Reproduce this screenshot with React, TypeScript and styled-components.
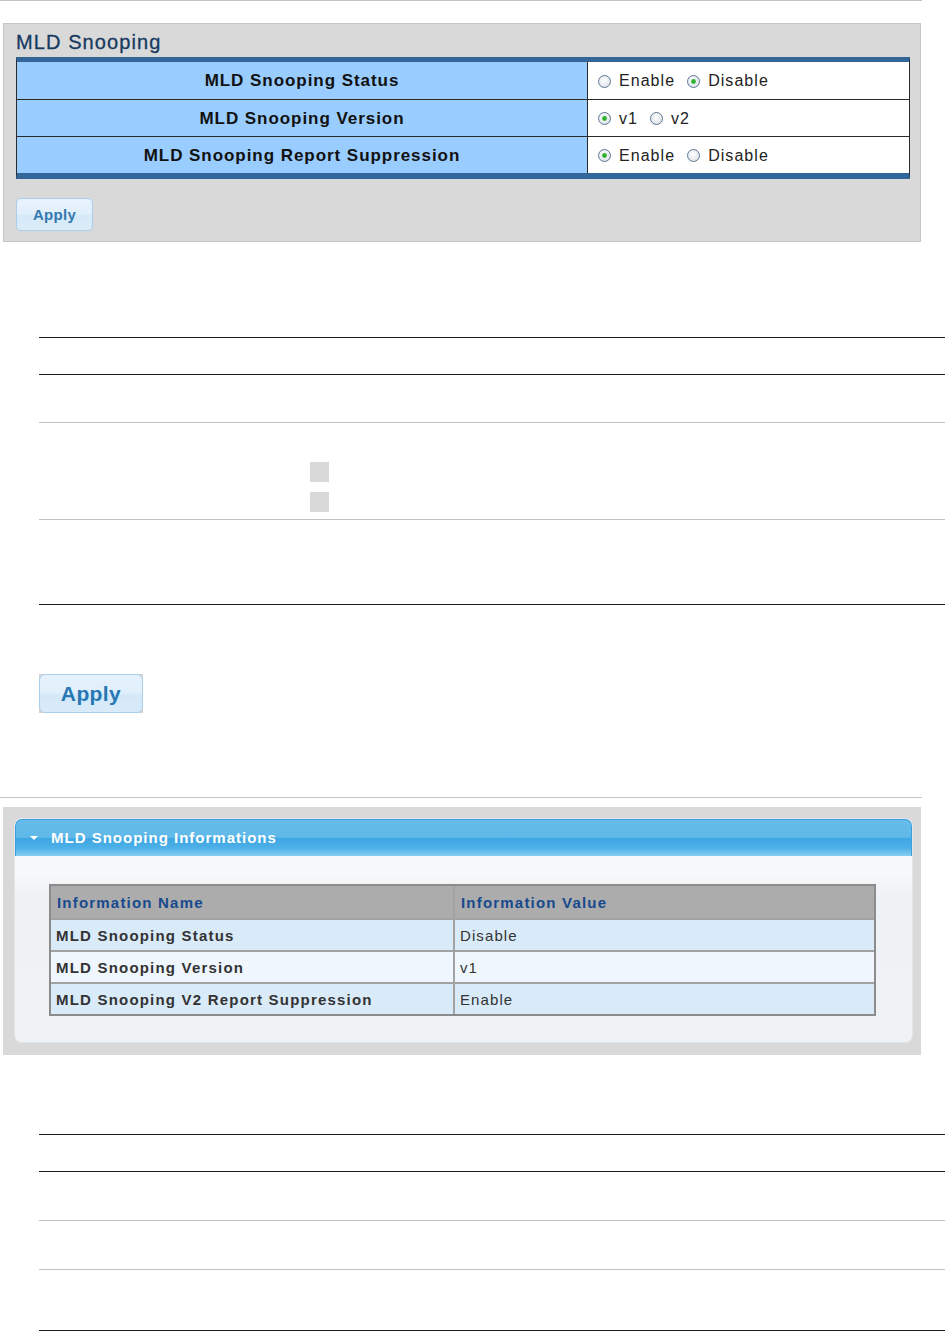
import { Fragment } from "react";
import styled, { createGlobalStyle } from "styled-components";

const GlobalStyle = createGlobalStyle`
  html, body {
    margin: 0;
    padding: 0;
    background: #fff;
  }
  body {
    font-family: "Liberation Sans", Arial, sans-serif;
  }
`;

const Page = styled.div`
  width: 945px;
  display: flex;
  flex-direction: column;
`;

const Rule = styled.div<{ $gap: number }>`
  width: 922px;
  height: 1px;
  margin-top: ${(p) => p.$gap}px;
  background: #c4c4c4;
  flex-shrink: 0;
`;

/* ---------- settings panel ---------- */

const Panel = styled.section`
  margin: 22px 0 0 3px;
  width: 918px;
  box-sizing: border-box;
  border: 1px solid #c6c6c6;
  background: #d9d9d9;
  padding: 6px 10px 10px 12px;
`;

const PanelTitle = styled.h2`
  margin: 0 0 3px;
  font-family: "Liberation Sans", Arial, sans-serif;
  font-size: 20px;
  line-height: 24px;
  font-weight: normal;
  letter-spacing: 1.1px;
  color: #163a60;
  -webkit-text-stroke: 0.3px #163a60;
`;

const SettingsGrid = styled.div`
  display: grid;
  grid-template-columns: 570px 1fr;
  grid-template-rows: 37px 36px 36px;
  gap: 1px;
  background: #2a2a2a;
  border-left: 1px solid #2a2a2a;
  border-right: 1px solid #2a2a2a;
  border-top: 5px solid #336699;
  border-bottom: 6px solid #336699;
`;

const LabelCell = styled.div`
  background: #99ccff;
  display: flex;
  align-items: center;
  justify-content: center;
  padding-top: 1px;
  font-size: 17px;
  font-weight: bold;
  letter-spacing: 0.95px;
  color: #111;
`;

const ValueCell = styled.div`
  background: #fff;
  display: flex;
  align-items: center;
  padding: 1px 0 0 10px;
`;

const Option = styled.label`
  display: flex;
  align-items: center;
  margin-right: 12px;
  font-size: 16px;
  letter-spacing: 1.05px;
  color: #222;
`;

const OptionText = styled.span`
  margin-left: 8px;
`;

const SmallApply = styled.button`
  margin-top: 19px;
  width: 77px;
  height: 33px;
  border: 1px solid #a9cdea;
  border-radius: 5px;
  background: linear-gradient(#e8f3fc 0%, #e1effb 48%, #d5e9f8 52%, #dcedf9 100%);
  font-family: "Liberation Sans", Arial, sans-serif;
  font-size: 15px;
  font-weight: bold;
  letter-spacing: 0.3px;
  color: #3478b0;
  padding: 0;
  display: block;
`;

function Radio({ checked }: { checked?: boolean }) {
  return (
    <svg width="13" height="13" viewBox="0 0 13 13">
      <defs>
        <radialGradient id="rg" cx="45%" cy="40%" r="60%">
          <stop offset="0%" stopColor="#ffffff" />
          <stop offset="100%" stopColor="#dde2e8" />
        </radialGradient>
      </defs>
      <circle cx="6.5" cy="6.5" r="6" fill="url(#rg)" stroke="#5f7893" strokeWidth="1" />
      {checked && <circle cx="6.5" cy="6.5" r="2.4" fill="#2fb12f" />}
    </svg>
  );
}

const settings = [
  { label: "MLD Snooping Status", options: ["Enable", "Disable"], selected: 1 },
  { label: "MLD Snooping Version", options: ["v1", "v2"], selected: 0 },
  { label: "MLD Snooping Report Suppression", options: ["Enable", "Disable"], selected: 0 },
];

/* ---------- empty document tables ---------- */

const DocTable = styled.div<{ $gap: number }>`
  margin: ${(p) => p.$gap}px 0 0 39px;
  width: 906px;
  border-top: 1px solid #1c1c1c;
  display: flex;
  flex-direction: column;
`;

const PlainRow = styled.div<{ $h: number; $dark?: boolean }>`
  height: ${(p) => p.$h}px;
  border-bottom: 1px solid ${(p) => (p.$dark ? "#1c1c1c" : "#c0c0c0")};
`;

const SquareRow = styled.div`
  height: 57px;
  border-bottom: 1px solid #c0c0c0;
  display: flex;
  flex-direction: column;
  gap: 10px;
  padding: 39px 0 0 271px;
`;

const Square = styled.div`
  width: 19px;
  height: 20px;
  background: #d9d9d9;
`;

const BigApplyFrame = styled.div`
  margin: 69px 0 0 39px;
  width: 104px;
  height: 39px;
  background: #d4d4d4;
`;

const BigApply = styled.button`
  width: 104px;
  height: 39px;
  border: 1px solid #a9cfec;
  border-radius: 6px;
  background: linear-gradient(#e6f2fc 0%, #e0effb 48%, #d3e8f8 54%, #d9ebf9 100%);
  font-family: "Liberation Sans", Arial, sans-serif;
  font-size: 21px;
  font-weight: bold;
  letter-spacing: 0.4px;
  color: #2677b3;
  padding: 0;
  display: block;
`;

/* ---------- information panel ---------- */

const InfoOuter = styled.section`
  margin: 9px 0 0 3px;
  width: 918px;
  height: 248px;
  box-sizing: border-box;
  background: #d9d9d9;
  padding: 12px 9px 13px 12px;
  display: flex;
`;

const InfoCard = styled.div`
  flex: 1;
  border-radius: 7px;
  background: linear-gradient(#f8f9fb 0px, #f7f8fa 55px, #eff2f5 75px, #f0f3f6 100%);
  box-shadow: 0 0 0 1px #e2e6ea;
  display: flex;
  flex-direction: column;
`;

const InfoHeader = styled.div`
  height: 37px;
  box-sizing: border-box;
  border: 1px solid #3b9fdc;
  border-bottom: none;
  border-radius: 7px 7px 0 0;
  background: linear-gradient(
    #66bcea 0%,
    #60b9e9 48%,
    #3da6e3 52%,
    #4eb1e8 78%,
    #86cdf0 100%
  );
  display: flex;
  align-items: center;
  padding: 0 0 1px 14px;
  color: #fff;
  font-size: 15px;
  font-weight: bold;
  letter-spacing: 1px;
`;

const Caret = styled.span`
  width: 0;
  height: 0;
  border-left: 4px solid transparent;
  border-right: 4px solid transparent;
  border-top: 4px solid #fff;
  margin-right: 13px;
`;

const InfoGrid = styled.div`
  margin: 28px 0 0 34px;
  width: 827px;
  box-sizing: border-box;
  display: grid;
  grid-template-columns: 402px 1fr;
  grid-template-rows: 32px 30px 30px 30px;
  gap: 2px;
  border: 2px solid #8c8c8c;
  background: #a2a2a2;
`;

const InfoHeadCell = styled.div`
  background: #acacac;
  display: flex;
  align-items: center;
  padding-left: 6px;
  font-size: 15px;
  font-weight: bold;
  letter-spacing: 1.2px;
  color: #174a8c;
`;

const InfoCell = styled.div<{ $odd: boolean; $bold?: boolean }>`
  background: ${(p) => (p.$odd ? "#d9eaf9" : "#eff6fd")};
  display: flex;
  align-items: center;
  padding-left: 5px;
  font-size: 15px;
  font-weight: ${(p) => (p.$bold ? "bold" : "normal")};
  letter-spacing: ${(p) => (p.$bold ? "1.2px" : "1.1px")};
  color: #333;
`;

const info = [
  ["MLD Snooping Status", "Disable"],
  ["MLD Snooping Version", "v1"],
  ["MLD Snooping V2 Report Suppression", "Enable"],
];

export default function App() {
  return (
    <Page>
      <GlobalStyle />
      <Rule $gap={0} />

      <Panel>
        <PanelTitle>MLD Snooping</PanelTitle>
        <SettingsGrid>
          {settings.map((s) => (
            <Fragment key={s.label}>
              <LabelCell>{s.label}</LabelCell>
              <ValueCell>
                {s.options.map((o, i) => (
                  <Option key={o}>
                    <Radio checked={i === s.selected} />
                    <OptionText>{o}</OptionText>
                  </Option>
                ))}
              </ValueCell>
            </Fragment>
          ))}
        </SettingsGrid>
        <SmallApply>Apply</SmallApply>
      </Panel>

      <DocTable $gap={95}>
        <PlainRow $h={36} $dark />
        <PlainRow $h={47} />
        <SquareRow>
          <Square />
          <Square />
        </SquareRow>
        <PlainRow $h={84} $dark />
      </DocTable>

      <BigApplyFrame>
        <BigApply>Apply</BigApply>
      </BigApplyFrame>

      <Rule $gap={84} />

      <InfoOuter>
        <InfoCard>
          <InfoHeader>
            <Caret />
            MLD Snooping Informations
          </InfoHeader>
          <InfoGrid>
            <InfoHeadCell>Information Name</InfoHeadCell>
            <InfoHeadCell>Information Value</InfoHeadCell>
            {info.map(([name, value], i) => (
              <Fragment key={name}>
                <InfoCell $odd={i % 2 === 0} $bold>
                  {name}
                </InfoCell>
                <InfoCell $odd={i % 2 === 0}>{value}</InfoCell>
              </Fragment>
            ))}
          </InfoGrid>
        </InfoCard>
      </InfoOuter>

      <DocTable $gap={79}>
        <PlainRow $h={36} $dark />
        <PlainRow $h={48} />
        <PlainRow $h={48} />
        <PlainRow $h={60} $dark />
      </DocTable>
    </Page>
  );
}
